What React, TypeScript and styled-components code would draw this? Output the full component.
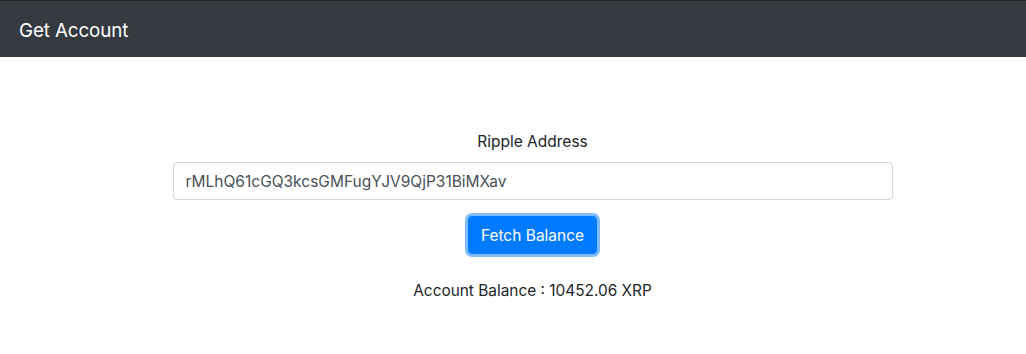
import React from 'react';
import styled, { createGlobalStyle } from 'styled-components';

const GlobalStyle = createGlobalStyle`
  body {
    margin: 0;
    font-family: Inter, "Liberation Sans", sans-serif;
    font-size: 16px;
    line-height: 1.5;
    color: #212529;
    background: #fff;
  }
  * {
    box-sizing: border-box;
  }
`;

const Navbar = styled.nav`
  height: 57px;
  background: #343a40;
  border-top: 1px solid #22262a;
  display: flex;
  align-items: center;
  padding: 3px 19px 0;
`;

const Brand = styled.span`
  color: #fff;
  font-size: 18.8px;
  line-height: 30px;
  letter-spacing: -0.1px;
`;

const Main = styled.main`
  display: flex;
  flex-direction: column;
  align-items: center;
  padding: 73px 0 0 39px;
`;

const Label = styled.label`
  font-size: 15.5px;
  line-height: 24px;
  margin-bottom: 8px;
`;

const Input = styled.input`
  width: 720px;
  height: 38px;
  padding: 6px 12px;
  font-family: inherit;
  font-size: 15.5px;
  color: #495057;
  border: 1px solid #ced4da;
  border-radius: 4px;
  outline: none;
`;

const Button = styled.button`
  margin-top: 16px;
  height: 38px;
  padding: 0 12px;
  font-family: inherit;
  font-size: 15.5px;
  color: #fff;
  background: #007bff;
  border: 1px solid #007bff;
  border-radius: 4px;
  box-shadow: 0 0 0 3px rgba(0, 123, 255, 0.5);
  cursor: pointer;
`;

const Balance = styled.p`
  margin: 25px 0 0;
  font-size: 15.4px;
  line-height: 24px;
`;

const App: React.FC = () => {
  return (
    <>
      <GlobalStyle />
      <Navbar>
        <Brand>Get Account</Brand>
      </Navbar>
      <Main>
        <Label htmlFor="address">Ripple Address</Label>
        <Input id="address" defaultValue="rMLhQ61cGQ3kcsGMFugYJV9QjP31BiMXav" />
        <Button>Fetch Balance</Button>
        <Balance>Account Balance : 10452.06 XRP</Balance>
      </Main>
    </>
  );
};

export default App;
